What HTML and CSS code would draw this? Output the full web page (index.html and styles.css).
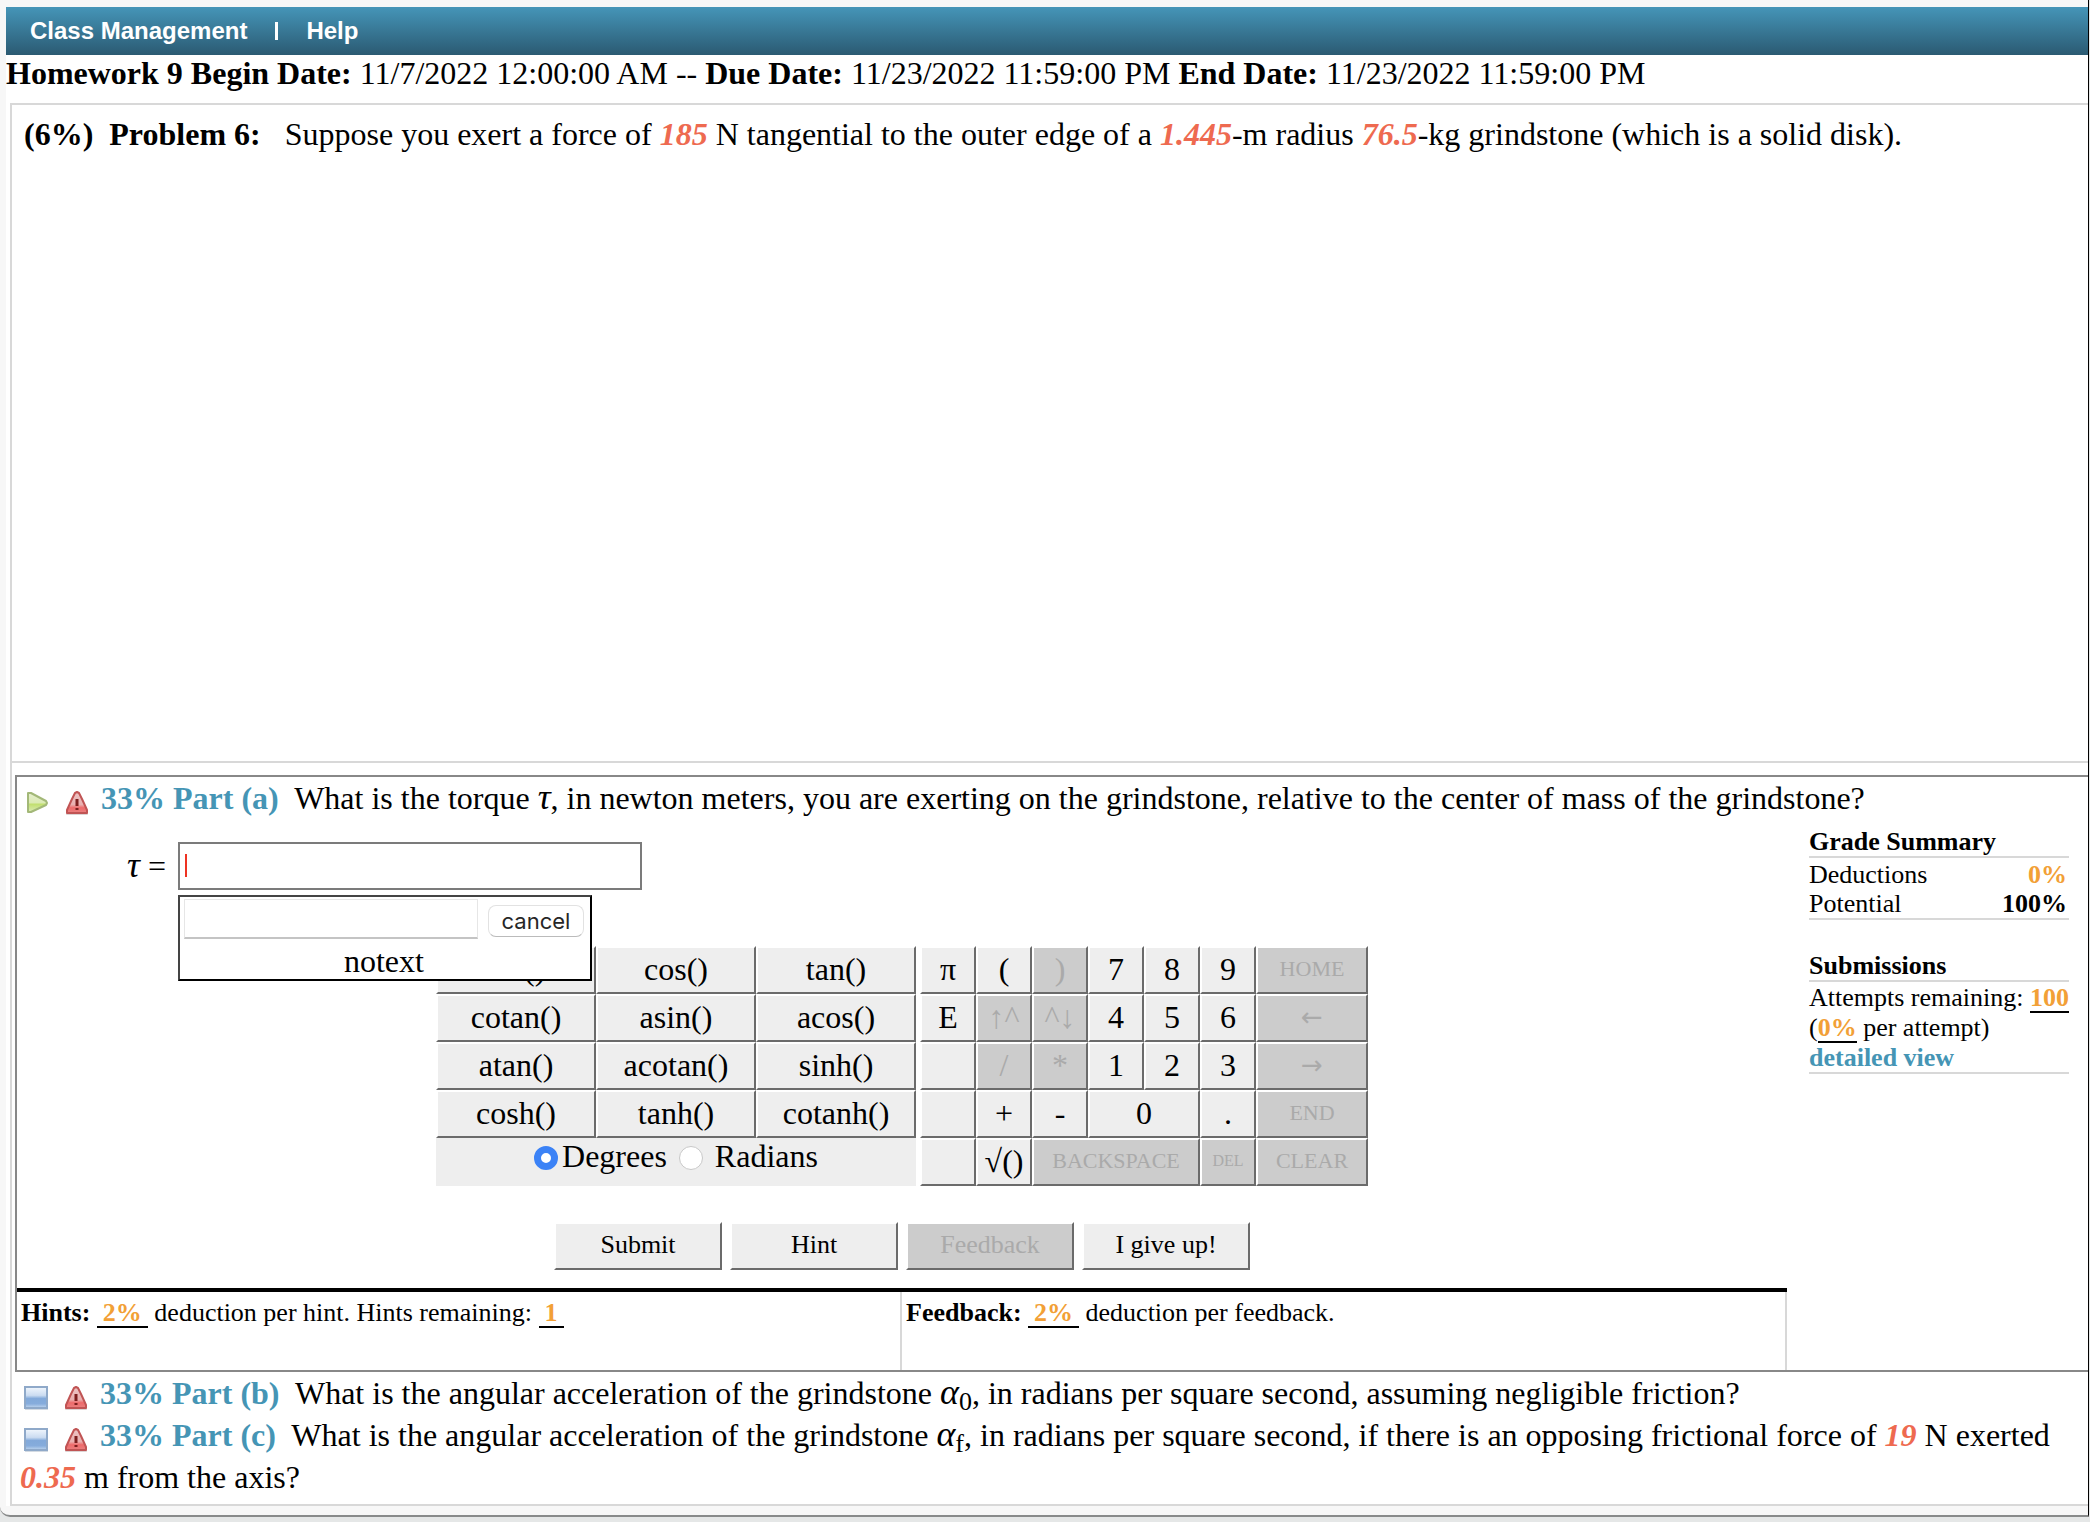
FILE: index.html
```html
<!DOCTYPE html>
<html lang="en">
<head>
    <meta charset="UTF-8">
    <meta name="viewport" content="width=device-width, initial-scale=1.0">
    <title>Homework 9</title>
    <link rel="stylesheet" href="styles.css">
</head>
<body>

<!-- Shared icons -->
<svg class="icon-defs" aria-hidden="true">
    <defs>
        <linearGradient id="redFill" x1="0" y1="0" x2="0" y2="1">
            <stop offset="0" stop-color="#ecc4c4"/>
            <stop offset="0.6" stop-color="#eab0b0"/>
            <stop offset="0.75" stop-color="#ee6a6a"/>
            <stop offset="1" stop-color="#e98080"/>
        </linearGradient>
        <linearGradient id="greenFill" x1="0" y1="0" x2="0" y2="1">
            <stop offset="0" stop-color="#e6efcf"/>
            <stop offset="0.5" stop-color="#dcebb4"/>
            <stop offset="0.6" stop-color="#c2e070"/>
            <stop offset="1" stop-color="#dcebb8"/>
        </linearGradient>
        <linearGradient id="blueFill" x1="0" y1="0" x2="0" y2="1">
            <stop offset="0" stop-color="#f2f7fd"/>
            <stop offset="0.4" stop-color="#cbdcf1"/>
            <stop offset="0.55" stop-color="#82a9da"/>
            <stop offset="0.8" stop-color="#86acdc"/>
            <stop offset="1" stop-color="#c3d8f0"/>
        </linearGradient>
    </defs>
    <symbol id="warning" viewBox="0 0 24 24">
        <rect x="1" y="22" width="22" height="2" rx="1" fill="#dcd4d4"/>
        <path d="M10 2l2-1 2 1 3 6 5 11v3H2v-3L7 8z" fill="url(#redFill)" stroke="#c05454" stroke-width="2" stroke-linejoin="round"/>
        <path d="M10.5 8h3v7h-3zM10.5 17h3v2h-3z" fill="#7d1f1f"/>
    </symbol>
    <symbol id="play" viewBox="0 0 24 24">
        <path d="M3 2l3 0 15 8 1 2-1 2L6 21 3 21z" fill="url(#greenFill)" stroke="#a3b878" stroke-width="2" stroke-linejoin="round"/>
    </symbol>
    <symbol id="block" viewBox="0 0 24 24">
        <rect x="1" y="23" width="23" height="1" fill="#d3dae2"/>
        <rect x="1" y="1" width="22" height="21" fill="url(#blueFill)" stroke="#8fa9c9" stroke-width="2"/>
    </symbol>
</svg>

<div class="page">
    <nav class="menu">
        <a href="#">Class Management</a>
        <span class="menu-divider"></span>
        <a href="#">Help</a>
    </nav>

    <p class="dates"><b>Homework 9 Begin Date:</b> 11/7/2022 12:00:00 AM -- <b>Due Date:</b> 11/23/2022 11:59:00 PM <b>End Date:</b> 11/23/2022 11:59:00 PM</p>

    <div class="problem">
        <div class="statement">
            <b>(6%)&nbsp; Problem 6:</b>&nbsp;&nbsp; Suppose you exert a force of <em>185</em> N tangential to the outer edge of a <em>1.445</em>-m radius <em>76.5</em>-kg grindstone (which is a solid disk).
        </div>

        <!-- Part (a), open -->
        <section class="part-open">
            <p class="part">
                <svg class="icon state"><use href="#play"/></svg>
                <svg class="icon"><use href="#warning"/></svg>
                <b class="part-name">33% Part (a)</b>&nbsp; What is the torque <i>τ</i>, in newton meters, you are exerting on the grindstone, relative to the center of mass of the grindstone?
            </p>

            <div class="part-body">
                <form class="work">
                    <div class="answer-row">
                        <label for="answer"><i>τ</i> =</label>
                        <div class="answer-wrap">
                            <input type="text" id="answer" class="answer">
                            <span class="caret"></span>
                            <div class="popup">
                                <div class="popup-row">
                                    <input type="text" class="popup-text" aria-label="Text">
                                    <button type="button" class="cancel">cancel</button>
                                </div>
                                <div class="popup-note">notext</div>
                            </div>
                        </div>
                    </div>

                    <div class="pads">
                        <div class="functions">
                            <button type="button">sin()</button>
                            <button type="button">cos()</button>
                            <button type="button">tan()</button>
                            <button type="button">cotan()</button>
                            <button type="button">asin()</button>
                            <button type="button">acos()</button>
                            <button type="button">atan()</button>
                            <button type="button">acotan()</button>
                            <button type="button">sinh()</button>
                            <button type="button">cosh()</button>
                            <button type="button">tanh()</button>
                            <button type="button">cotanh()</button>
                            <div class="units">
                                <input type="radio" name="unit" id="degrees" checked>
                                <label for="degrees">Degrees</label>
                                <input type="radio" name="unit" id="radians">
                                <label for="radians">&nbsp;Radians</label>
                            </div>
                        </div>

                        <div class="numbers">
                            <button type="button">π</button>
                            <button type="button">(</button>
                            <button type="button" disabled>)</button>
                            <button type="button">7</button>
                            <button type="button">8</button>
                            <button type="button">9</button>
                            <button type="button" class="word" disabled>HOME</button>

                            <button type="button">E</button>
                            <button type="button" disabled>↑^</button>
                            <button type="button" disabled>^↓</button>
                            <button type="button">4</button>
                            <button type="button">5</button>
                            <button type="button">6</button>
                            <button type="button" class="arrow" disabled>←</button>

                            <button type="button" aria-label="Blank"></button>
                            <button type="button" disabled>/</button>
                            <button type="button" disabled>*</button>
                            <button type="button">1</button>
                            <button type="button">2</button>
                            <button type="button">3</button>
                            <button type="button" class="arrow" disabled>→</button>

                            <button type="button" aria-label="Blank"></button>
                            <button type="button">+</button>
                            <button type="button">-</button>
                            <button type="button" class="span-2">0</button>
                            <button type="button">.</button>
                            <button type="button" class="word" disabled>END</button>

                            <button type="button" aria-label="Blank"></button>
                            <button type="button">√()</button>
                            <button type="button" class="word span-3" disabled>BACKSPACE</button>
                            <button type="button" class="tiny" disabled>DEL</button>
                            <button type="button" class="word" disabled>CLEAR</button>
                        </div>
                    </div>

                    <div class="actions">
                        <button type="button">Submit</button>
                        <button type="button">Hint</button>
                        <button type="button" disabled>Feedback</button>
                        <button type="button">I give up!</button>
                    </div>

                    <div class="costs">
                        <div><b>Hints:</b> <span class="blank wide">2%</span> deduction per hint. Hints remaining: <span class="blank wide">1</span></div>
                        <div><b>Feedback:</b> <span class="blank wide">2%</span> deduction per feedback.</div>
                    </div>
                </form>

                <aside class="grades">
                    <h3>Grade Summary</h3>
                    <dl>
                        <dt>Deductions</dt><dd class="orange">0%</dd>
                        <dt>Potential</dt><dd>100%</dd>
                    </dl>
                    <h3>Submissions</h3>
                    <div class="attempts">
                        <div>Attempts remaining: <span class="blank">100</span></div>
                        <div>(<span class="blank">0%</span> per attempt)</div>
                        <a href="#">detailed view</a>
                    </div>
                </aside>
            </div>
        </section>

        <!-- Closed parts -->
        <div class="parts-closed">
            <p class="part">
                <svg class="icon state"><use href="#block"/></svg>
                <svg class="icon"><use href="#warning"/></svg>
                <b class="part-name">33% Part (b)</b>&nbsp; What is the angular acceleration of the grindstone <i>α</i><sub>0</sub>, in radians per square second, assuming negligible friction?
            </p>
            <p class="part">
                <svg class="icon state"><use href="#block"/></svg>
                <svg class="icon"><use href="#warning"/></svg>
                <b class="part-name">33% Part (c)</b>&nbsp; What is the angular acceleration of the grindstone <i>α</i><sub>f</sub>, in radians per square second, if there is an opposing frictional force of <em>19</em> N exerted <em>0.35</em> m from the axis?
            </p>
        </div>
    </div>
</div>

</body>
</html>
```
FILE: styles.css
```css
* {
    box-sizing: border-box;
}
body {
    margin: 0;
    background-color: #e5e7e7;
    font-family: "Liberation Serif", "Times New Roman", serif;
    font-size: 32px;
    line-height: 36px;
    color: #000;
}
p, h3, dl, dd {
    margin: 0;
}
em {
    font-weight: bold;
    color: #ee6a50;
}
i {
    font-size: 36px;
    line-height: 0;
}
.icon-defs {
    position: absolute;
    width: 0;
    height: 0;
}
.page {
    margin-right: 1px;
    padding: 7px 0 9px 6px;
    background: #f7f7f7;
    border-right: 1px solid #000;
    border-bottom: 2px solid #888a8a;
    border-bottom-left-radius: 10px;
}

/* Top menu */
.menu {
    display: flex;
    align-items: center;
    gap: 28px;
    height: 48px;
    padding: 0 24px;
    background: linear-gradient(#4595b8, #2b5a72);
}
.menu a {
    font: bold 24px "Liberation Sans", Arial, sans-serif;
    color: #fff;
    text-decoration: none;
}
.menu-divider {
    width: 3px;
    height: 18px;
    background: #fff;
}
.dates {
    padding-bottom: 12px;
    background: #fff;
}

/* Problem box */
.problem {
    padding-left: 4px;
    background: #fff;
}
.statement {
    min-height: 660px;
    padding: 11px 12px;
    border: 2px solid #d8d8d8;
    border-right: none;
}
.part-open {
    margin-top: -2px;
    padding: 14px 0 0 3px;
    border-left: 2px solid #d8d8d8;
}
.part-open > .part {
    padding: 0 4px 9px 4px;
    border: 2px solid #888;
    border-right: none;
    border-bottom: none;
}
.part {
    line-height: 42px;
}
.icon {
    width: 24px;
    height: 24px;
    margin-right: 4px;
    vertical-align: -6px;
}
.state {
    margin: 0 8px 0 4px;
}
.part-name {
    color: #4595b5;
}
sub {
    font-size: 26px;
    line-height: 0;
    vertical-align: -6px;
}
.part-body {
    display: flex;
    border-left: 2px solid #888;
    border-bottom: 2px solid #888;
}
.work {
    flex: 1;
}

/* Answer */
.answer-row {
    display: flex;
    align-items: center;
    gap: 12px;
    padding: 14px 0 0 110px;
}
.answer-wrap {
    position: relative;
}
.answer {
    display: block;
    width: 464px;
    height: 48px;
    padding: 4px 8px;
    border: 2px solid #7b7b7b;
    font: inherit;
}
.caret {
    position: absolute;
    left: 7px;
    top: 12px;
    width: 2px;
    height: 23px;
    background: #ee3322;
}
.popup {
    position: absolute;
    left: 0;
    top: 53px;
    width: 414px;
    padding: 2px 6px 0 4px;
    background: #fff;
    border: 2px solid #000;
    border-top-color: #444;
    border-left-color: #444;
}
.popup-row {
    display: flex;
    align-items: center;
    gap: 10px;
}
.popup-text {
    flex: 1;
    min-width: 0;
    height: 40px;
    border: 1px solid #e6e6e6;
    border-bottom: 2px solid #c4c4c4;
}
.cancel {
    width: 96px;
    height: 32px;
    margin: 4px 0 0;
    padding: 0;
    background: #fff;
    border: 1px solid #e2e2e2;
    border-bottom-color: #bbb;
    border-radius: 8px;
    font: 22px Inter, "Open Sans", sans-serif;
    color: #262626;
}
.popup-note {
    height: 40px;
    line-height: 44px;
    text-align: center;
}

/* Calculator */
.pads {
    display: flex;
    justify-content: center;
    gap: 4px;
    margin-top: 56px;
}
.functions,
.numbers {
    display: grid;
    grid-auto-rows: 48px;
}
.functions {
    grid-template-columns: repeat(3, 160px);
}
.numbers {
    grid-template-columns: repeat(6, 56px) 112px;
}
.span-2 {
    grid-column: span 2;
}
.span-3 {
    grid-column: span 3;
}
.pads button,
.actions button {
    padding: 0 0 2px;
    background: #eee;
    border: 2px solid #fff;
    border-right-color: #6b6b6b;
    border-bottom-color: #6b6b6b;
    font: inherit;
    color: #000;
}
.pads button:disabled,
.actions button:disabled {
    background: #ccc;
    color: #aaa;
}
.pads .word {
    font-size: 22px;
}
.pads .tiny {
    font-size: 16px;
}
.pads .arrow {
    font-family: "DejaVu Sans", sans-serif;
    font-size: 26px;
}
.units {
    grid-column: span 3;
    display: flex;
    justify-content: center;
    background: #eee;
}
.units input {
    appearance: none;
    width: 24px;
    height: 24px;
    margin: 8px 4px 0 12px;
    background: #fff;
    border: 1px solid #c8c8c8;
    border-radius: 50%;
}
.units input:first-child {
    margin-left: 0;
}
.units input:checked {
    border: 7px solid #3b82f6;
}

/* Buttons and deductions */
.actions {
    display: flex;
    justify-content: center;
    gap: 8px;
    margin: 36px 0 18px;
}
.actions button {
    width: 168px;
    height: 48px;
    font-size: 26px;
}
.costs {
    display: grid;
    grid-template-columns: 1fr 1fr;
    border-top: 4px solid #000;
    font-size: 26px;
}
.costs div {
    height: 78px;
    padding: 3px 4px;
    border-right: 2px solid #d8d8d8;
}
.blank {
    display: inline-block;
    line-height: 26px;
    border-bottom: 2px solid #000;
    font-weight: bold;
    color: #f2a036;
}
.wide {
    padding: 0 6px;
}

/* Grades */
.grades {
    width: 260px;
    margin: 0 19px 0 22px;
    font-size: 26px;
    line-height: 29px;
    white-space: nowrap;
}
.grades h3 {
    font-size: 26px;
    line-height: 28px;
    border-bottom: 2px solid #d8d8d8;
}
.grades dl {
    display: grid;
    grid-template-columns: 1fr auto;
    margin-bottom: 32px;
    padding-top: 2px;
    border-bottom: 2px solid #d8d8d8;
}
.grades dd {
    padding-right: 2px;
    font-weight: bold;
    text-align: right;
}
.grades .orange {
    color: #f2a036;
}
.attempts {
    padding-top: 1px;
    border-bottom: 2px solid #d8d8d8;
}
.attempts a {
    display: block;
    font-weight: bold;
    color: #4595b5;
    text-decoration: none;
}
.parts-closed {
    padding: 0 8px 6px 8px;
    border-left: 2px solid #d8d8d8;
    border-bottom: 2px solid #d8d8d8;
}
```
